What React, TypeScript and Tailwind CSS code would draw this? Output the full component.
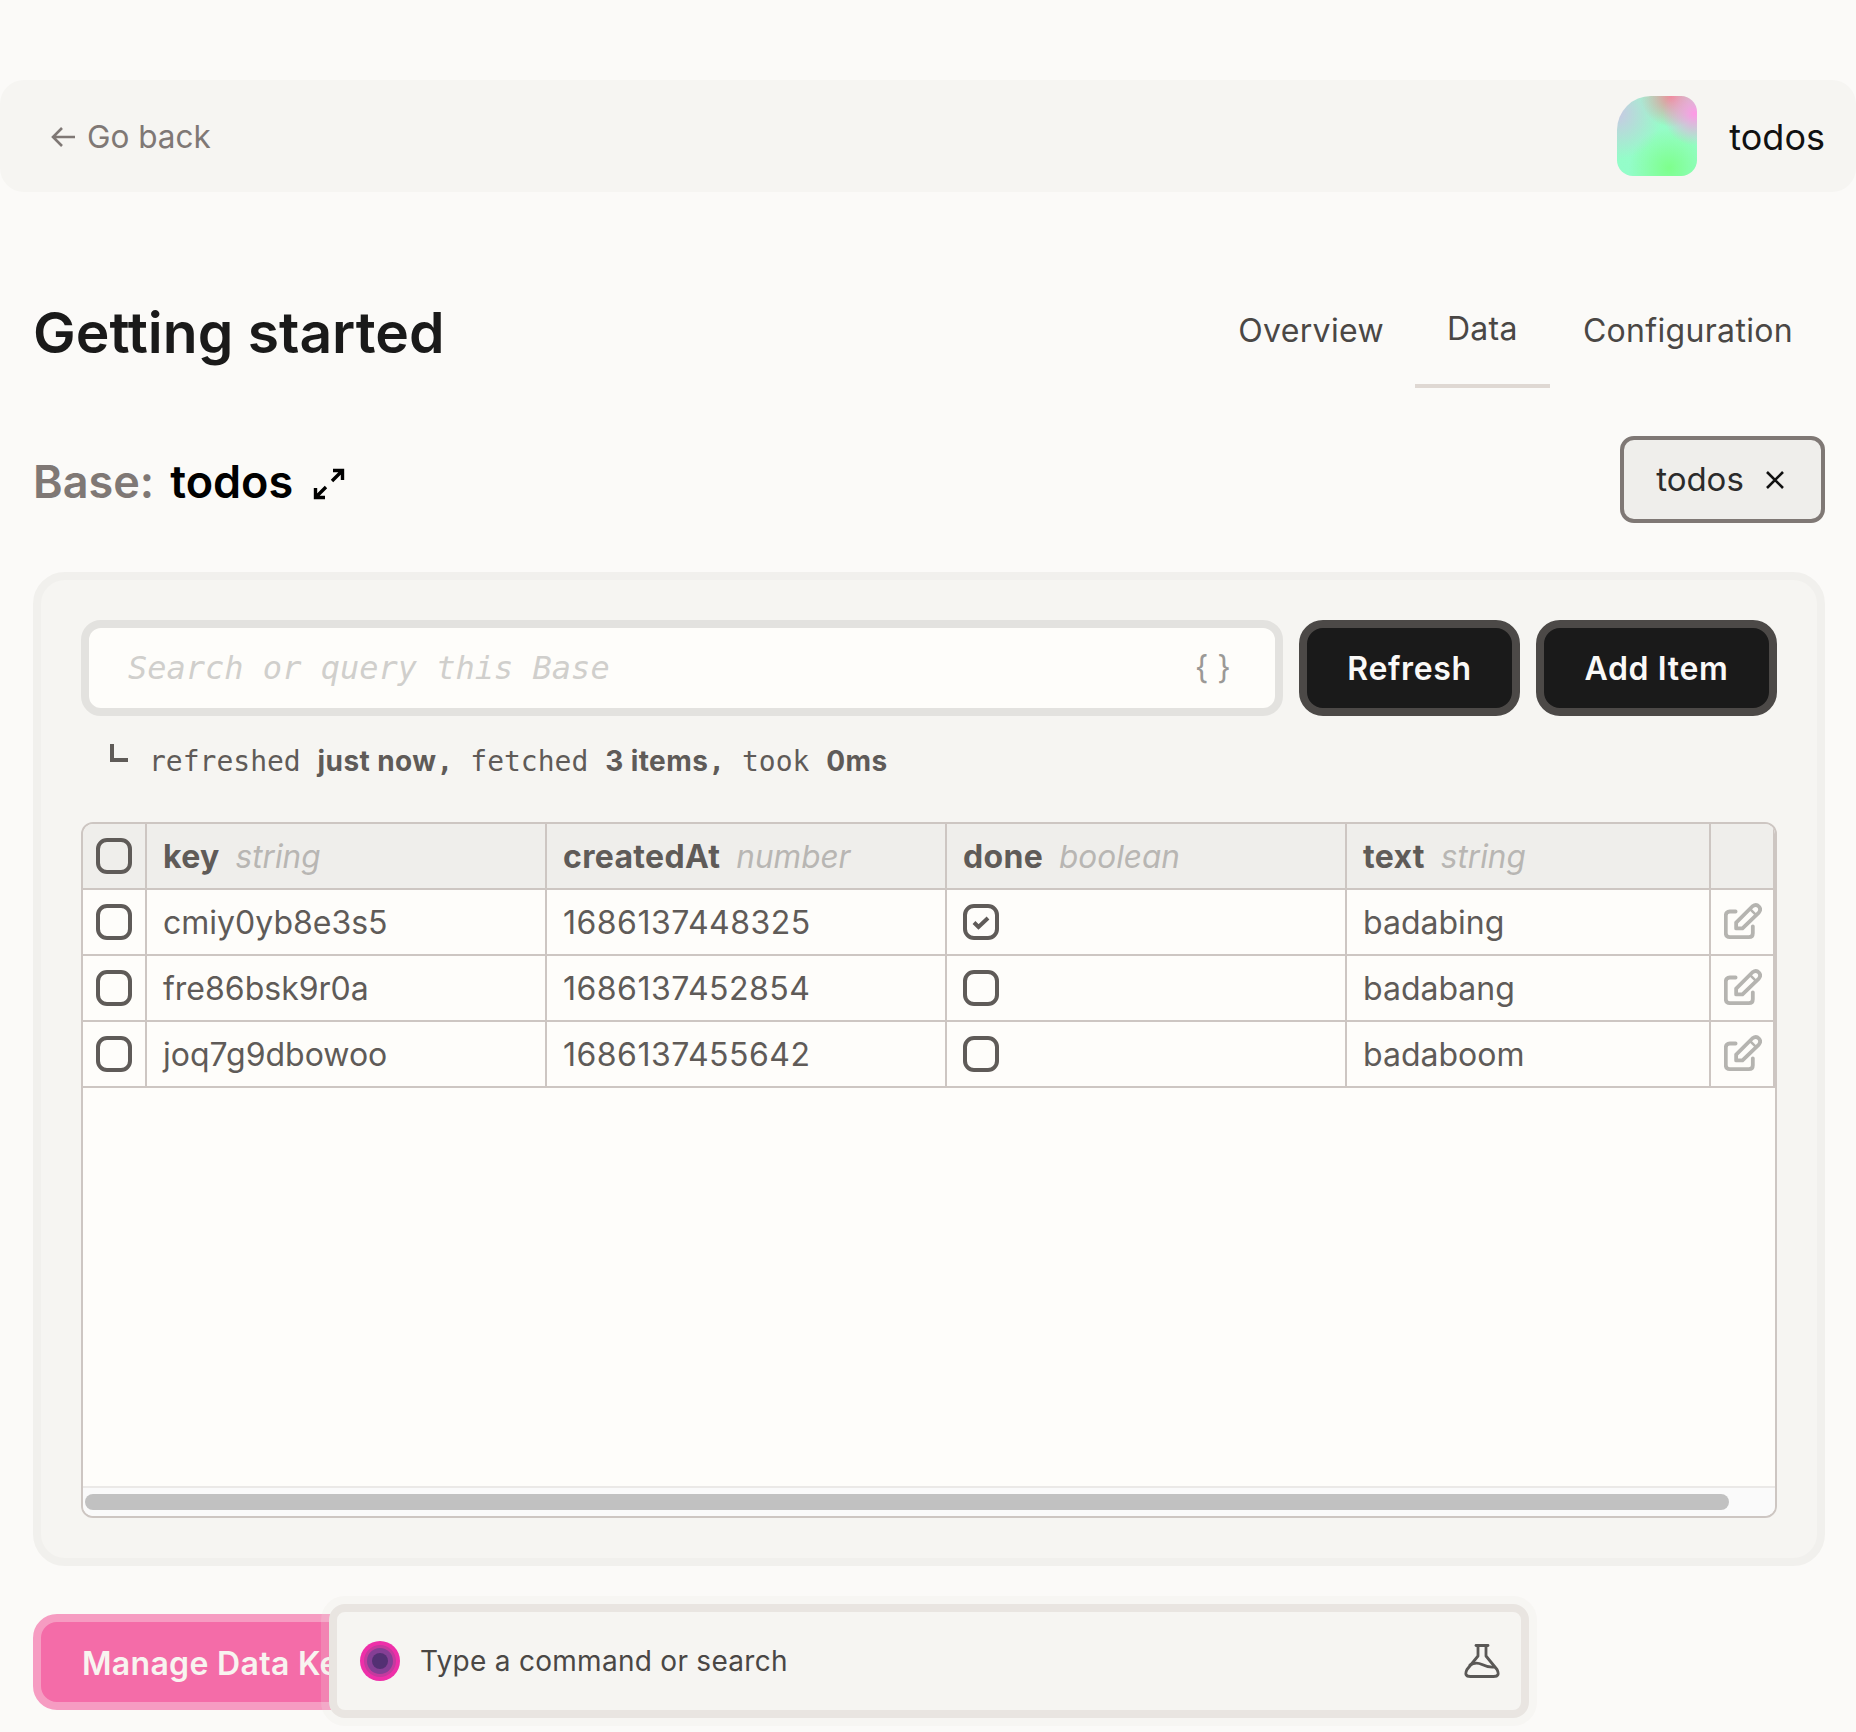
import { ReactNode } from "react";

const SANS = "font-['Inter',sans-serif]";
const MONO = "font-['DejaVu_Sans_Mono',monospace]";

const columns = [
  { name: "key", type: "string" },
  { name: "createdAt", type: "number" },
  { name: "done", type: "boolean" },
  { name: "text", type: "string" },
];

const rows = [
  { key: "cmiy0yb8e3s5", createdAt: "1686137448325", done: true, text: "badabing" },
  { key: "fre86bsk9r0a", createdAt: "1686137452854", done: false, text: "badabang" },
  { key: "joq7g9dbowoo", createdAt: "1686137455642", done: false, text: "badaboom" },
];

const ROW = "grid grid-cols-[64px_400px_400px_400px_364px_64px] h-[66px] border-b-2 border-[#cdc6c2]";

function Cell({ children, className = "px-[16px] pt-[2px]" }: { children?: ReactNode; className?: string }) {
  return <div className={`flex items-center border-r-2 border-[#cdc6c2] ${className}`}>{children}</div>;
}

function Checkbox({ checked }: { checked?: boolean }) {
  return (
    <div className="flex h-9 w-9 shrink-0 items-center justify-center rounded-[11px] border-4 border-[#5f5b58]">
      {checked && (
        <svg width="20" height="16" viewBox="0 0 20 16" fill="none">
          <path d="M3 8.5 L7.5 13 L17 4" stroke="#5f5b58" strokeWidth="4" />
        </svg>
      )}
    </div>
  );
}

function EditIcon() {
  return (
    <svg width="38" height="38" viewBox="0 0 36 36" fill="none" stroke="#b5b4b0" strokeWidth="3.6" strokeLinejoin="round" strokeLinecap="round" className="-mt-[3px] shrink-0">
      <path d="M11 9 H5.5 Q1.7 9 1.7 12.8 V29.5 Q1.7 33.3 5.5 33.3 H23.5 Q27.3 33.3 27.3 29.5 V23" />
      <path d="M11.5 25 V19.5 L27 4 Q30.5 1.5 33 4.3 Q35.5 7 33 10 L17.5 25 Z" />
      <path d="M25 7 L30 12" strokeWidth="2.4" />
    </svg>
  );
}

function ExpandIcon() {
  return (
    <svg width="32" height="32" viewBox="0 0 32 32" fill="none" stroke="#000" strokeWidth="3.4">
      <path d="M19 13 L29 3 M20 2.5 H29.5 V12" />
      <path d="M13 19 L3 29 M12 29.5 H2.5 V20" />
    </svg>
  );
}

function FlaskIcon() {
  return (
    <svg width="36" height="34" viewBox="0 0 36 34" fill="none" stroke="#5a5856" strokeWidth="2.8" strokeLinejoin="round" strokeLinecap="round">
      <path d="M12 1.5 H24" />
      <path d="M14 1.5 V12 L3 25.5 Q-0.5 32.5 6.5 32.5 H29.5 Q36.5 32.5 33 25.5 L22 12 V1.5" />
      <path d="M6 21 Q12 17.5 18 20.5 T30 23" />
    </svg>
  );
}

function PillDot() {
  return (
    <div className="flex h-10 w-10 items-center justify-center rounded-full bg-[#ee2fa9]">
      <div className="flex h-8 w-8 items-center justify-center rounded-full bg-[#c43a9e]">
        <div className="flex h-[26px] w-[26px] items-center justify-center rounded-full bg-[#853f95]">
          <div className="h-4 w-4 rounded-full bg-[#533073]" />
        </div>
      </div>
    </div>
  );
}

export default function App() {
  return (
    <div className={`relative min-h-screen bg-[#fbfaf8] pt-20 [font-optical-sizing:none] ${SANS}`}>
      {/* Top bar */}
      <header className="flex h-[112px] items-center justify-between rounded-3xl bg-[#f6f5f2] pl-[51px] pr-[31px]">
        <div className="flex items-center gap-[12px] pt-[2px] text-[31.5px] text-[#7f7875]">
          <svg width="24" height="22" viewBox="0 0 24 22" fill="none" stroke="#7f7875" strokeWidth="2.6">
            <path d="M24 11 H2 M11 2 L2 11 L11 20" />
          </svg>
          <span>Go back</span>
        </div>
        <div className="flex items-center gap-[32px]">
          <div className="h-20 w-20 rounded-[16px] rounded-tl-[34px] bg-[radial-gradient(circle_at_97%_22%,#ff98e6_0%,rgba(255,152,230,0)_32%),radial-gradient(circle_at_68%_0%,#f08a98_0%,rgba(240,138,152,0)_32%),radial-gradient(circle_at_0%_22%,#c9c8e4_0%,rgba(201,200,228,0)_45%),radial-gradient(circle_at_65%_90%,#7eff8c_0%,rgba(126,255,140,0)_45%),linear-gradient(#98fcc8,#93fdc9)]" />
          <span className="pt-[2px] text-[36px] text-[#111]">todos</span>
        </div>
      </header>

      <main className="pl-[33px] pr-[31px]">
        {/* Title and tabs */}
        <div className="mt-[104px] flex h-[92px] items-start justify-between">
          <h1 className="mt-px text-[57px] font-semibold leading-[72px] text-[#1a1a1a]">Getting started</h1>
          <nav className="flex text-[32px] leading-[48px] tracking-[0.01em] text-[#4a4745]">
            <a className="mt-[11px] pl-[33px] pr-[31px]">Overview</a>
            <a className="h-[92px] w-[135px] border-b-4 border-[#dfd8d3] pt-[9px] text-center">Data</a>
            <a className="mt-[11px] pl-[33px] pr-[32px]">Configuration</a>
          </nav>
        </div>

        {/* Base heading */}
        <div className="mt-12 flex h-[87px] items-center justify-between">
          <div className="flex items-center pt-[5px] text-[45px] font-semibold">
            <span className="text-[#7f7875]">Base:</span>
            <span className="ml-[16px] text-black">todos</span>
            <span className="ml-[20px] mt-[4px]">
              <ExpandIcon />
            </span>
          </div>
          <div className="flex h-[87px] w-[205px] items-center justify-center gap-[21px] rounded-[14px] border-4 border-[#7f7875] bg-[#efeeeb] pr-[4px] text-[33px] text-[#2b2b2b]">
            <span>todos</span>
            <svg width="20" height="20" viewBox="0 0 20 20" fill="none" stroke="#111" strokeWidth="2.6">
              <path d="M2 2 L18 18 M18 2 L2 18" />
            </svg>
          </div>
        </div>

        {/* Data panel */}
        <section className="mt-[49px] rounded-[32px] border-8 border-[#f1f0ed] bg-[#f6f5f2] p-10">
          <div className="flex gap-4">
            <div className={`flex h-24 w-[1202px] items-center justify-between rounded-[20px] border-8 border-[#e3e2df] bg-[#fefdfa] pl-[39px] pr-[44px] text-[32px] ${MONO}`}>
              <span className="italic text-[#d0cfcc]">Search or query this Base</span>
              <span className={`text-[#9b9996] ${SANS}`}>{"{ }"}</span>
            </div>
            <button className="h-24 w-[221px] rounded-[24px] border-8 border-[#4c4947] bg-[#1a1a1a] pt-px text-[32px] font-semibold tracking-[0.02em] text-[#faf9f7]">Refresh</button>
            <button className="h-24 w-[241px] rounded-[24px] border-8 border-[#4c4947] bg-[#1a1a1a] pt-px text-[32px] font-semibold tracking-[0.02em] text-[#faf9f7]">Add Item</button>
          </div>

          {/* Status line */}
          <div className={`mb-[41px] ml-[29px] mt-[25px] flex h-10 items-start gap-[21px] text-[28px] leading-10 text-[#5f5b58] ${MONO}`}>
            <div className="mt-[3px] h-[18px] w-[18px] border-b-4 border-l-4 border-[#5f5b58]" />
            <p className="whitespace-pre">
              refreshed <b className={`font-bold tracking-[0.015em] ${SANS}`}>just now</b><b>,</b> fetched <b className={`font-bold tracking-[0.015em] ${SANS}`}>3 items</b><b>,</b> took <b className={`font-bold tracking-[0.015em] ${SANS}`}>0ms</b>
            </p>
          </div>

          {/* Table */}
          <div className="flex h-[696px] w-[1696px] flex-col overflow-hidden rounded-xl border-2 border-[#cdc6c2] bg-[#fefdfa] text-[32px] text-[#5f5b58]">
            <div className={`${ROW} bg-[#efeeeb]`}>
              <Cell className="px-[13px]">
                <Checkbox />
              </Cell>
              {columns.map((c) => (
                <Cell key={c.name}>
                  <span className="font-bold tracking-[0.01em]">{c.name}</span>
                  <span className="ml-[16px] text-[31.5px] italic text-[#b8b6b3]">{c.type}</span>
                </Cell>
              ))}
              <Cell />
            </div>
            {rows.map((r) => (
              <div key={r.key} className={ROW}>
                <Cell className="px-[13px]">
                  <Checkbox />
                </Cell>
                <Cell>{r.key}</Cell>
                <Cell className="px-[16px] pt-[2px] tracking-[0.015em]">{r.createdAt}</Cell>
                <Cell className="px-[16px]">
                  <Checkbox checked={r.done} />
                </Cell>
                <Cell>{r.text}</Cell>
                <Cell className="px-[13px]">
                  <EditIcon />
                </Cell>
              </div>
            ))}
            <div className="flex-1" />
            <div className="h-[30px] border-t-2 border-[#ebe9e7] bg-[#fafafa] pl-[2px] pt-[6px]">
              <div className="h-4 w-[1644px] rounded-lg bg-[#c1c1c1]" />
            </div>
          </div>
        </section>

        {/* Manage keys */}
        <button className="mt-12 block h-24 w-[400px] rounded-[24px] border-8 border-[#f69cc2] bg-[#f46ca8] pl-[41px] pt-[3px] text-left text-[32px] font-semibold tracking-[0.01em] text-[#f8f4f0]">
          Manage Data Keys
        </button>
      </main>

      {/* Command bar floats over the page */}
      <div className="absolute left-[329px] top-[1604px] flex h-[114px] w-[1200px] items-center justify-between rounded-2xl border-8 border-[#e9e5e1] bg-[#f6f5f2] pl-[23px] pr-[21px] shadow-[0_0_0_8px_rgba(233,229,225,0.2)]">
        <div className="flex items-center gap-5">
          <PillDot />
          <span className="text-[28px] tracking-[0.01em] text-[#4a4745]">Type a command or search</span>
        </div>
        <FlaskIcon />
      </div>
    </div>
  );
}
